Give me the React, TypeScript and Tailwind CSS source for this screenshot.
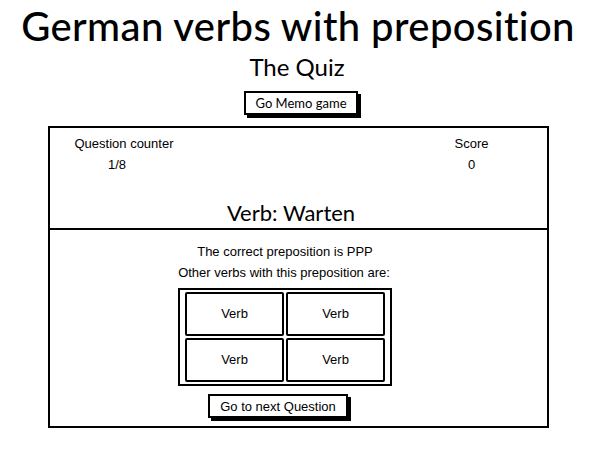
import React from 'react';

const head = { fontFamily: 'Lato, "Noto Sans", sans-serif' };
const body = { fontFamily: '"Liberation Sans", Arial, sans-serif' };

function SketchButton({ label, className = '', font = head }: { label: string; className?: string; font?: React.CSSProperties }) {
  return (
    <button
      style={font}
      className={`bg-white border-2 border-black shadow-[3px_3px_0_#000] text-[13px] text-black leading-none ${className}`}
    >
      {label}
    </button>
  );
}

function VerbCell() {
  return (
    <div
      style={body}
      className="flex items-center justify-center border-2 border-black rounded-[2px] text-[13px] text-black h-[44px]"
    >
      Verb
    </div>
  );
}

export default function App() {
  return (
    <div className="w-[592px] h-[450px] bg-white flex flex-col items-center text-black">
      <h1 style={head} className="text-[40px] font-medium leading-none mt-[6px] tracking-[0.4px] ml-[4px]">
        German verbs with preposition
      </h1>
      <h2 style={head} className="text-[24px] leading-none mt-[9px] ml-[2px]">
        The Quiz
      </h2>
      <SketchButton label="Go Memo game" className="mt-[12px] w-[114px] h-[24px] ml-[10px]" />

      <div className="mt-[11px] ml-[4px] w-[501px] h-[302px] border-2 border-black flex flex-col">
        {/* Top: counters + verb */}
        <div className="h-[102px] border-b-2 border-black flex flex-col" style={body}>
          <div className="flex justify-between px-[25px] pt-[6px] text-[13px]">
            <div className="flex flex-col items-center">
              <span>Question counter</span>
              <span className="mt-[1px] mr-[14px]">1/8</span>
            </div>
            <div className="flex flex-col items-center mr-[33px]">
              <span>Score</span>
              <span className="mt-[1px]">0</span>
            </div>
          </div>
          <div style={head} className="mt-auto mb-[4px] text-center text-[22px] leading-none mr-[14px]">
            Verb: Warten
          </div>
        </div>

        {/* Bottom: answer + related verbs */}
        <div className="flex-1 flex flex-col items-center" style={body}>
          <p className="mt-[15px] text-[13px] leading-none ml-[-26px]">The correct preposition is PPP</p>
          <p className="mt-[8px] text-[13px] leading-none ml-[-28px]">Other verbs with this preposition are:</p>
          <div className="mt-[9px] ml-[-26px] w-[214px] border-2 border-black px-[5px] py-[2px] grid grid-cols-2 gap-[2px]">
            <VerbCell />
            <VerbCell />
            <VerbCell />
            <VerbCell />
          </div>
          <SketchButton label="Go to next Question" font={body} className="mt-[8px] ml-[-40px] w-[140px] h-[24px]" />
        </div>
      </div>
    </div>
  );
}
